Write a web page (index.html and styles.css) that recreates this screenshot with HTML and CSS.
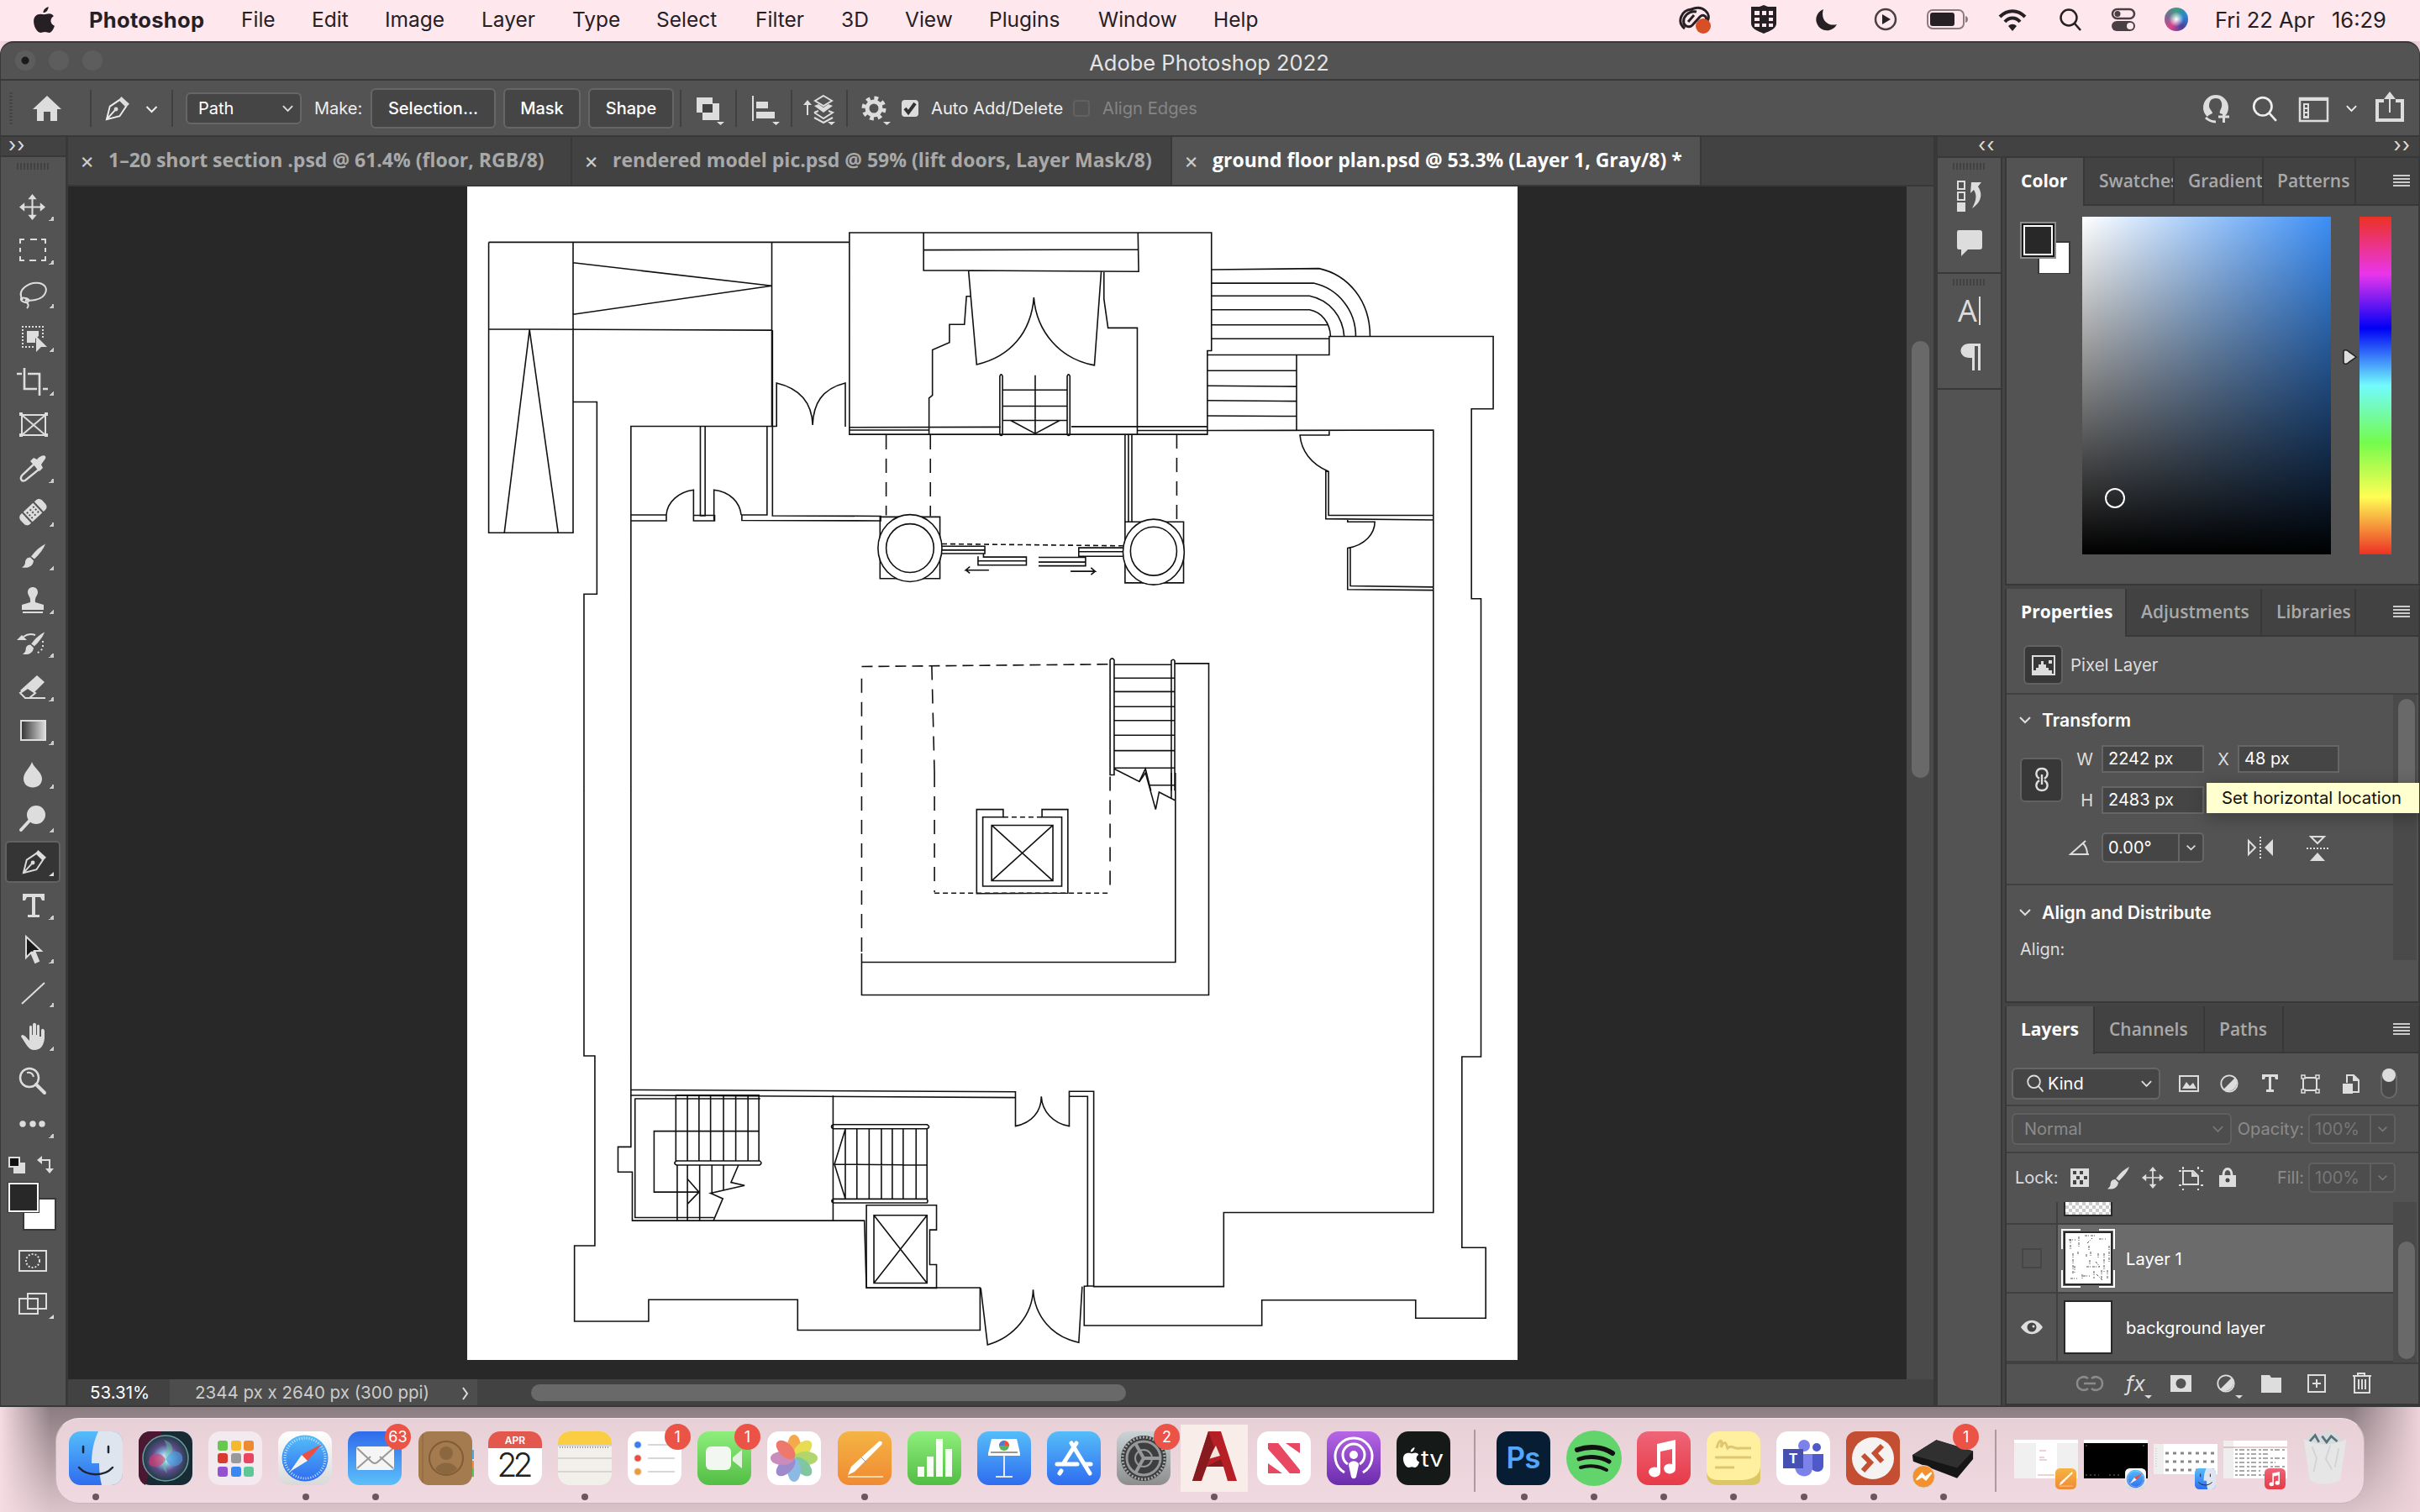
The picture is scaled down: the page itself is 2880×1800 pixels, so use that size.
FILE: index.html
```html
<!DOCTYPE html>
<html lang="en">
<head>
    <meta charset="UTF-8">
    <title>Adobe Photoshop 2022</title>
    <link rel="stylesheet" href="styles.css">
</head>
<body>
    <!-- shared icons -->
    <svg class="defs">
        <defs>
            <linearGradient id="blue" x1="0" y1="0" x2="0" y2="1"><stop offset="0" stop-color="#55bdf9"/><stop offset="1" stop-color="#2f6cf0"/></linearGradient>
            <linearGradient id="blueDown" x1="0" y1="0" x2="0" y2="1"><stop offset="0" stop-color="#2f6bea"/><stop offset="1" stop-color="#5cc0fa"/></linearGradient>
            <linearGradient id="orange" x1="0" y1="0" x2="0" y2="1"><stop offset="0" stop-color="#f4b443"/><stop offset="1" stop-color="#f08a34"/></linearGradient>
            <linearGradient id="green" x1="0" y1="0" x2="0" y2="1"><stop offset="0" stop-color="#8eee7c"/><stop offset="1" stop-color="#53bd45"/></linearGradient>
            <linearGradient id="pinkRed" x1="0" y1="0" x2="0" y2="1"><stop offset="0" stop-color="#ee6578"/><stop offset="1" stop-color="#e73a47"/></linearGradient>
            <linearGradient id="purple" x1="0" y1="0" x2="0" y2="1"><stop offset="0" stop-color="#b666e6"/><stop offset="1" stop-color="#6a2cac"/></linearGradient>
            <linearGradient id="grey" x1="0" y1="0" x2="0" y2="1"><stop offset="0" stop-color="#c9d3d6"/><stop offset="1" stop-color="#8d8d8d"/></linearGradient>
            <linearGradient id="white" x1="0" y1="0" x2="0" y2="1"><stop offset="0" stop-color="#fff"/><stop offset="1" stop-color="#d9d9d9"/></linearGradient>
            <linearGradient id="blackWhite"><stop offset="0" stop-color="#333"/><stop offset="1" stop-color="#ddd"/></linearGradient>
            <radialGradient id="siri"><stop offset="0" stop-color="#fff"/><stop offset=".25" stop-color="#8fc3ea"/><stop offset=".6" stop-color="#5b4c86"/><stop offset="1" stop-color="#1f3a44"/></radialGradient>
        </defs>
        <symbol id="chevron" viewBox="0 0 16 10"><path d="M2 2l6 6 6-6" fill="none" stroke="currentColor" stroke-width="2"/></symbol>
        <symbol id="pen" viewBox="0 0 30 30"><path d="M2 28L6 12 18 4l8 8-8 12zM2 28l11-12" fill="none" stroke="currentColor" stroke-width="2"/><circle cx="13.500" cy="15.500" r="2.500"/><path d="M17 4l3-4 10 9-4 4z"/></symbol>
        <symbol id="brush" viewBox="0 0 30 30"><path d="M29 0c-6 3-12 8-17 15l4 3C22 12 27 6 29 0zM11 16c-4 0-6 3-6 6 0 3-2 5-4 6 6 1 13 0 14-8z"/></symbol>
        <symbol id="move" viewBox="0 0 30 30"><path d="M15 0l5 6h-4v8h8v-4l6 5-6 5v-4h-8v8h4l-5 6-5-6h4v-8H6v4l-6-5 6-5v4h8V6h-4z"/></symbol>
        <symbol id="search" viewBox="0 0 30 30"><g fill="none" stroke="currentColor" stroke-width="2.500"><circle cx="13" cy="12" r="10"/><path d="M20 19l8 9"/></g></symbol>
        <symbol id="adjust" viewBox="0 0 22 22"><circle cx="11" cy="11" r="9.700" fill="none" stroke="currentColor" stroke-width="1.800"/><path d="M18 4A10 10 0 0 1 4 18z"/></symbol>
        <symbol id="apple" viewBox="0 0 24 30"><path d="M17 0c0 4-3 7-6 7 0-4 3-6 6-7zM12 9c2 0 3-1 6-1 2 0 4 1 5 3-5 3-4 9 1 11-1 4-4 8-6 8s-3-1-5-1-4 1-5 1C4 30 0 23 0 17c0-7 5-10 12-8z"/></symbol>
        <symbol id="finder" viewBox="0 0 64 64">
            <rect width="64" height="64" rx="14" fill="url(#blue)"/><path d="M35 0h15a14 14 0 0 1 14 14v36a14 14 0 0 1-14 14H39c-2-8-3-16-3-26h-9C27 24 30 10 35 0z" fill="#dfe5ee"/>
            <path d="M17 18v7M47 18v7M12 43c10 11 30 11 40 0" fill="none" stroke="#1d2530" stroke-width="2.500" stroke-linecap="round"/>
        </symbol>
        <symbol id="safari" viewBox="0 0 64 64">
            <rect width="64" height="64" rx="14" fill="url(#white)"/><circle cx="32" cy="32" r="27.500" fill="url(#blue)"/><circle cx="32" cy="32" r="24" fill="none" stroke="#cfe5fb" stroke-width="3" stroke-dasharray="1 2"/>
            <path d="M52 15L28 28l7 7z" fill="#ee4d42"/><path d="M14 48l14-20 7 7z" fill="#f2f2f2"/>
        </symbol>
        <symbol id="pages" viewBox="0 0 64 64"><rect width="64" height="64" rx="14" fill="url(#orange)"/><path d="M12 54h42" stroke="#fbd9a8" stroke-width="2"/><path d="M12 52l4-10 33-30c3-1 5 1 3 4L20 48z" fill="#fff"/><path d="M28 31l6 6" stroke="#999"/></symbol>
        <symbol id="music" viewBox="0 0 64 64"><rect width="64" height="64" rx="14" fill="url(#pinkRed)"/><path d="M24 15l22-5v34a7 6 0 1 1-4-5V21l-14 3v24a7 6 0 1 1-4-5z" fill="#fff"/></symbol>
    </svg>

    <header class="menubar">
        <svg class="apple" viewBox="0 0 24 30"><use href="#apple"/></svg>
        <nav class="menu">
            <b>Photoshop</b><span>File</span><span>Edit</span><span>Image</span><span>Layer</span><span>Type</span><span>Select</span><span>Filter</span><span>3D</span><span>View</span><span>Plugins</span><span>Window</span><span>Help</span>
        </nav>
        <div class="status-icons">
            <svg viewBox="0 0 40 34"><g fill="none" stroke="#262024" stroke-width="3"><path d="M8 28C-2 20 4 6 16 5c14-6 24 6 19 14M22 8c-9-2-17 6-15 14 2 4 7 5 10 2l9-10c4-4 9 0 7 4M12 20l7-8"/></g><circle cx="30" cy="25" r="9" fill="#d84f27"/></svg>
            <svg viewBox="0 0 40 34"><path d="M5 2h10l5-2 5 2h10v20c0 6-8 9-15 12C13 31 5 28 5 22z" fill="#262024"/><path d="M9 7h6v5H9zM18 7h5v5h-5zM26 7h5v5h-5zM9 15h6v4H9zM26 15h5v4h-5zM9 22h6v4H9zM18 22h5v4h-5zM26 22h5v4h-5z" fill="#ffe7ee"/></svg>
            <svg viewBox="0 0 40 34"><path d="M16 5a13 13 0 1 0 16 18C21 26 12 17 16 5z" fill="#262024"/></svg>
            <svg viewBox="0 0 40 34"><circle cx="20" cy="17" r="12" fill="none" stroke="#4a3f44" stroke-width="2.500"/><path d="M16 11l10 6-10 6z" fill="#262024"/></svg>
            <svg class="battery" viewBox="0 0 52 34"><rect x="2" y="6" width="43" height="22" rx="6" fill="none" stroke="#8d7b82" stroke-width="2"/><rect x="5" y="9" width="29" height="16" rx="3" fill="#262024"/><path d="M47 13v8c4-1 4-7 0-8z" fill="#8d7b82"/></svg>
            <svg viewBox="0 0 40 34"><g fill="none" stroke="#262024" stroke-width="4"><path d="M5 14c9-9 21-9 30 0M11 20c5-6 13-6 18 0"/></g><path d="M15 25c3-3 7-3 10 0l-5 6z" fill="#262024"/></svg>
            <svg viewBox="0 0 40 34"><g fill="none" stroke="#262024" stroke-width="2.500"><circle cx="19" cy="15" r="9.500"/><path d="M26 22l7 8"/></g></svg>
            <svg viewBox="0 0 40 34"><rect x="7" y="5" width="26" height="11" rx="5.500" fill="none" stroke="#4a3f44" stroke-width="2.500"/><circle cx="13" cy="10.500" r="3.500" fill="#4a3f44"/><rect x="6" y="19" width="28" height="12" rx="6" fill="#4a3f44"/><circle cx="28" cy="25" r="4" fill="#ffe7ee"/></svg>
            <i class="siri-ball"></i>
        </div>
        <span class="date">Fri 22 Apr</span><span class="time">16:29</span>
    </header>

    <main class="window">
        <div class="titlebar"><div class="lights"><i></i><i></i><i></i></div><span>Adobe Photoshop 2022</span></div>

        <div class="options">
            <svg class="options-left" viewBox="0 0 220 66">
                <path d="M12 14v40" stroke="#454545" stroke-width="4" stroke-dasharray="2 2"/>
                <path d="M55 18L38 34h5v14h8V37h8v11h8V34h5z"/>
                <path d="M107 11v44M204 11v44" stroke="#404040" stroke-width="2"/>
                <use href="#pen" x="124" y="19" width="29" height="29"/><use href="#chevron" x="171" y="29" width="17" height="10"/>
            </svg>
            <div class="select path">Path <svg viewBox="0 0 16 10"><use href="#chevron"/></svg></div>
            <span class="make">Make:</span>
            <button class="selection">Selection...</button><button class="mask">Mask</button><button class="shape">Shape</button>
            <svg class="options-icons" viewBox="0 0 260 66">
                <g stroke="#404040" stroke-width="2"><path d="M8 11v44M74 11v44M140 11v44M206 11v44"/></g>
                <path d="M27 20h19v7h8v20H34v-9h-7z"/><path d="M34 28h12v10H34z" fill="#424242"/><path d="M51 49h9l-4.500 4zM117 49h9l-4.500 4zM183 49h9l-4.500 4zM249 49h9l-4.500 4z"/>
                <path d="M93 18h2v30h-2zM98 25h14v8H98zM98 37h22v8H98z"/>
                <path d="M178 18l10 6-10 6-10-6z" fill="none" stroke="#ddd" stroke-width="2"/><path d="M167 30l5-2 6 4 6-4 5 2-11 8zM160 29v12h-2V29h-4l5-6 5 6z"/><path d="M167 38l11 7 11-7-5-2M167 38l5-2M167 44l11 6 11-6" fill="none" stroke="#ddd" stroke-width="2"/>
                <circle cx="238" cy="33" r="8" fill="none" stroke="#ddd" stroke-width="5"/><circle cx="238" cy="33" r="12" fill="none" stroke="#ddd" stroke-width="5" stroke-dasharray="4.700 4.725"/>
            </svg>
            <i class="check on"><svg viewBox="0 0 20 20"><path d="M4 10l4 5 8-11" fill="none" stroke="#333" stroke-width="4"/></svg></i><span class="auto">Auto Add/Delete</span>
            <i class="check"></i><span class="dim">Align Edges</span>
            <svg class="options-right" viewBox="0 0 260 66">
                <circle cx="26" cy="32" r="15"/><path d="M26 21c6 0 8 5 7 10-1 4-3 5-2 8 5 1 8 3 10 5l-5 8H20l-6-7c2-3 5-5 8-6 0-3-3-4-4-8 0-6 2-10 8-10z" fill="#535353"/><path d="M14 44c4 4 8 5 12 5" fill="none" stroke="#ddd" stroke-width="3"/><path d="M29 43h13M35.500 36v14" stroke="#ddd" stroke-width="3"/>
                <use href="#search" x="68" y="18" width="32" height="32"/>
                <path d="M126 21h33v27h-33z" fill="none" stroke="#ddd" stroke-width="2.500"/><path d="M126 20h33v4h-33zM130 27h7v18h-7z"/><path d="M133.500 29v14" stroke="#535353" stroke-width="3" stroke-dasharray="3 2"/>
                <use href="#chevron" x="180" y="28" width="15" height="10"/>
                <path d="M226 24h-8v23h30V24h-8" fill="none" stroke="#ddd" stroke-width="4"/><path d="M232 38V22h-6l7-9 7 9h-6v16z"/>
            </svg>
        </div>

        <div class="workspace">
            <aside class="tools">
                <div class="strip left">››</div>
                <div class="grip"></div>
                <svg class="tool" viewBox="0 0 76 52"><use href="#move" x="23" y="11" width="31" height="31"/></svg>
                <svg class="tool" viewBox="0 0 76 52"><path d="M24 18v-5h5M36 13h8M49 13h5v5M54 23v5M54 33v5h-5M43 38h-8M29 38h-5v-5M24 28v-5" fill="none" stroke="#ddd" stroke-width="2"/></svg>
                <svg class="tool" viewBox="0 0 76 52"><path d="M27 33C19 21 35 11 47 13c13 3 9 17-5 20-5 1-9 1-12 0M25 31c3-1 9 0 10 3-3 4-11 1-10-3zM30 35c4 2 5 5 2 8" fill="none" stroke="#ddd" stroke-width="2"/></svg>
                <svg class="tool" viewBox="0 0 76 52"><path d="M51 26V13H27v24h13" fill="none" stroke="#ddd" stroke-width="2" stroke-dasharray="2 2"/><path d="M32 18h14v6l-4 3v5H32zM43 24l13 13h-7l-6 6z"/></svg>
                <svg class="tool" viewBox="0 0 76 52"><path d="M20 17h6M33 17h14v26M29 10v25h15M51 35h6" fill="none" stroke="#ddd" stroke-width="2.600"/></svg>
                <svg class="tool nocorner" viewBox="0 0 76 52"><path d="M26 14h28v24H26zl28 24M54 14L26 38" fill="none" stroke="#ddd" stroke-width="2"/><path d="M23 11h4v4h-4zM53 11h4v4h-4zM23 36h4v4h-4zM53 36h4v4h-4z"/></svg>
                <svg class="tool" viewBox="0 0 76 52"><path d="M41 20L27 33c-4 4-2 9 3 7l16-13z" fill="none" stroke="#ddd" stroke-width="2.400"/><path d="M36 17l4-4 4 2c5-6 12-6 10-1l-5 7 2 4-4 4z"/></svg>
                <svg class="tool" viewBox="0 0 76 52"><g transform="rotate(-43 39 26)"><rect x="22" y="18" width="35" height="16" rx="5"/><path d="M30 17v18M48 17v18" stroke="#535353" stroke-width="2"/><path d="M33 22h13M33 26h13M33 30h13" stroke="#535353" stroke-width="2" stroke-dasharray="2 3"/></g></svg>
                <svg class="tool" viewBox="0 0 76 52"><use href="#brush" x="25" y="11" width="30" height="31"/></svg>
                <svg class="tool" viewBox="0 0 76 52"><path d="M33 17c0-8 12-8 12 0 0 4-4 6-3 12l10 3v6H26v-6l10-3c1-6-3-8-3-12zM27 40h24v2H27z"/></svg>
                <svg class="tool" viewBox="0 0 76 52"><use href="#brush" x="26" y="11" width="28" height="31"/><path d="M20 22l6-6 6 6z"/><path d="M28 18c4-3 8-4 14-2" fill="none" stroke="#ddd" stroke-width="2"/><path d="M51 23v9l-7 6" fill="none" stroke="#ddd" stroke-width="2" stroke-dasharray="2 3"/></svg>
                <svg class="tool" viewBox="0 0 76 52"><path d="M44 12l9 8-18 18-11-8z"/><path d="M30 39h24M33 27l-9 6 6 6h5l7-6z" fill="#535353" stroke="#ddd" stroke-width="2"/></svg>
                <svg class="tool" viewBox="0 0 76 52"><rect x="25" y="14" width="29" height="23" fill="url(#blackWhite)" stroke="#ddd" stroke-width="2"/></svg>
                <svg class="tool" viewBox="0 0 76 52"><path d="M38 11c2 7 12 12 12 20 0 14-22 14-22 0 0-8 8-13 10-20z"/></svg>
                <svg class="tool" viewBox="0 0 76 52"><circle cx="43" cy="22" r="11"/><path d="M36 28L25 40" stroke="#ddd" stroke-width="4" stroke-linecap="round"/></svg>
                <svg class="tool active" viewBox="0 0 76 52"><rect x="7" y="2" width="64" height="48" rx="4" fill="#353535" stroke="#626262" stroke-width="2"/><use href="#pen" x="26" y="12" width="29" height="29"/><path d="M58 43l6-5v5z"/></svg>
                <svg class="tool" viewBox="0 0 76 52"><path d="M27 12h26v8h-3l-2-4h-6v21h5v3H33v-3h5V16h-6l-2 4h-3z"/></svg>
                <svg class="tool" viewBox="0 0 76 52"><path d="M31 11l18 17h-8l5 12-4 2-5-12-6 6z" fill="#181818" stroke="#ddd" stroke-width="2"/><path d="M37 29l5 13 4-2-5-12z"/></svg>
                <svg class="tool" viewBox="0 0 76 52"><path d="M26 39l27-25" stroke="#ddd" stroke-width="2"/></svg>
                <svg class="tool" viewBox="0 0 76 52"><path d="M26 24c4 0 6 4 9 7V15c0-3 3-3 3 0v9h1V12c0-3 4-3 4 0v12h1V14c0-3 3-3 3 0v12h2v-7c0-3 3-3 4 0v9c-1 9-5 14-12 14-8 0-10-8-16-16z"/></svg>
                <svg class="tool nocorner" viewBox="0 0 76 52"><circle cx="35" cy="23" r="11" fill="none" stroke="#ddd" stroke-width="2.500"/><path d="M32 17c4-1 7 1 8 5" fill="none" stroke="#ddd" stroke-width="2"/><path d="M43 31l10 10" stroke="#ddd" stroke-width="4" stroke-linecap="round"/></svg>
                <svg class="tool" viewBox="0 0 76 52"><circle cx="27" cy="26" r="3.700"/><circle cx="39" cy="26" r="3.700"/><circle cx="50" cy="26" r="3.700"/></svg>
                <svg class="swatches" viewBox="0 0 78 230">
                    <path d="M16 20h14v13H16z"/><path d="M11 14h12v11H11z" fill="#111" stroke="#ddd" stroke-width="2"/><path d="M48 17h11v13" fill="none" stroke="#ddd" stroke-width="2"/><path d="M50 12v10l-6-5zM54 27h10l-5 6z"/>
                    <path d="M28 63h38v37H28z" fill="#fff" stroke="#383838" stroke-width="2"/><path d="M9 43h38v37H9z" fill="#383838"/><path d="M11 45h34v33H11z" fill="#282828" stroke="#fff" stroke-width="2"/>
                    <path d="M23 125h32v24H23z" fill="#4b4b4b" stroke="#ddd" stroke-width="2"/><circle cx="39" cy="137" r="8" fill="none" stroke="#ddd" stroke-width="2" stroke-dasharray="2 2"/>
                    <path d="M23 182h22v18H23zM33 176h22v18H33z" fill="#535353" stroke="#ddd" stroke-width="2"/><path d="M58 206l6-5v5z"/>
                </svg>
            </aside>

            <section class="document">
                <div class="tabs">
                    <div class="tab one"><i>×</i>1–20 short section .psd @ 61.4% (floor, RGB/8)</div>
                    <div class="tab two"><i>×</i>rendered model pic.psd @ 59% (lift doors, Layer Mask/8)</div>
                    <div class="tab three active"><i>×</i>ground floor plan.psd @ 53.3% (Layer 1, Gray/8) *</div>
                </div>
                <div class="canvas">
                    <svg class="paper" viewBox="0 0 1250 1397">
                        <!-- north half -->
                        <g transform="translate(-6 -2) scale(.80995 .45918)">
                            <path d="M39 149H569V124H1101V430H1095V647H569V149M39 149V902H163V149M455 149V627M163 202l292 60-292 74M39 374l416 3M62 902l37-526 42 526M163 563h35v498h-19v510M248 1571V626h214M350 626v232h7V626M448 626v230h-37v14l204 1v-12l-159-1V377M248 856h52v15h-52M300 856c1-33 18-60 40-65v80h31v-14h-31M410 856c-2-33-16-60-40-65v80"/>
                            <path d="M678 124v98h66l250 3-1-101M678 169l315-1M744 222l12 244c50-20 80-84 84-174 4 90 39 160 89 176l10-243M943 226v70l6 75h43v276M747 289h-6l-3 73h-22v47l-25 19v118l-5 7v94M569 629l222-1M569 636h118M895 627h200M992 637h103M462 627V514c36 15 52 55 53 109 1-54 13-94 48-109v113"/>
                            <path d="M790 648V496q2-8 4 0v152q-2 4-4 0M889 648V496q2-8 4 0v152q-2 4-4 0M842 494v151M794 532h95M794 574h95M794 611h95M806 611l36 34 36-34"/>
                            <path d="M1101 220l158-3c42 16 75 82 75 176M1101 255h150c36 14 62 70 62 138M1101 288h144c31 11 49 56 51 105M1101 324h144c18 6 30 33 31 69M1101 363h171M1101 399h173M1095 441h179v-48h241v188h-32v492h14v498M1226 441v196M1095 482h131M1095 521l131 2M1095 559l131 2M1095 599l131 1M1095 637l332-1v935M1274 637v12h-43c2 40 16 75 42 94v114h154M1273 743h-4v123l158 3M1301 867v7h40c0 30-14 60-40 68v107l126 2M1305 942v98l122 3M974 647v227h86v158h-86V874M979 647v225M984 647v225M614 861h88v160h-88z"/>
                            <ellipse cx="658" cy="942" rx="47" ry="87" class="fill"/><ellipse cx="658" cy="942" rx="35" ry="63"/><ellipse cx="1016" cy="952" rx="45" ry="85" class="fill"/><ellipse cx="1016" cy="950" rx="34" ry="63"/>
                            <path d="M705 937h63v19h-63M705 947h63M766 956v9h63v21h-71v-23M758 975h71M971 941h-65v22h65M906 951h65M847 966h69v22h-69M847 978h69M774 999h-34l6-9M740 999l6 8M894 1002h36l-6-9M930 1002l-6 9"/>
                            <path d="M623 649v208M688 649v210M1050 647v225" class="dash"/><path d="M705 931l266 5" class="short"/>
                            <path d="M587 1280v245M690 1247l4 278" class="dash"/><path d="M587 1249l365-6" class="dash small"/>
                            <path d="M952 1530V1232q3-8 6 0v298zM1042 1571V1234q3-6 5 0v337M1047 1241h50v330M958 1244h84M958 1279h89M958 1314h89M958 1353h89M958 1389h89M958 1427h89M958 1467h89M958 1512h89M958 1514l37 33 9-33 8 57"/>
                        </g>
                        <!-- south half -->
                        <g transform="translate(-6 698) scale(.80995 .45918)">
                            <path d="M179 46v688h16v492h-30v196h109v-56h219v79h268v-110H594l-3-174H250v-126h-21v-65h19V46M248 822l565 5v89c24-8 38-38 38-77 1 38 17 70 41 77v-90h36v506h191v-192h308V46M1497 46v690h-28v495h35v183h-103v-47h-226v66H914v-102l14-1M248 836l565 6M892 839h27v492M254 844v309h116M254 845h184"/>
                            <path d="M587 468v108h510V46M587 491h461V0M995 23l9-23 15 95 5-45 24 22M1042 0v66M1010 32h38"/>
                            <path d="M587 0v468M694 0v310M952 10v302" class="dash"/><path d="M694 312h258M795 115h57" class="short"/>
                            <path d="M756 313V95h39v20h-30v179h116V115h-29V95h38v217zM778 136h90v144h-90zl90 144M868 136l-90 144"/>
                            <path d="M314 836h122v170M314 836v170M331 836v170M348 836v170M365 836v170M384 836v170M402 836v170M420 836v170M436 929H282v158h66l-17-34M348 1087l-17 31M315 1006h122q5 6 0 11H315q-6-5 0-11M316 1017v145M331 1017v145M349 1017v145M367 1017v72M384 1017v66M406 1017l-11 45 20 8-50 20 18 14-14 58"/>
                            <path d="M545 837v325M545 912h138q6 6 0 11H545q-5-6 0-11M545 1105h138q2 5 0 10H545q-4-5 0-10M547 1015l136 2M563 924l-16 91 16 89zM580 924v181M598 924v181M616 924v181M632 924v181M648 924v181M667 924v181M683 924v181"/>
                            <path d="M594 1335v-214h103v64h-10v90h10v61zM605 1147h78v176h-78zl78 176M683 1147l-78 176M762 1336l10 147c40-20 66-80 67-143 2 70 28 122 67 137l5-145"/>
                        </g>
                    </svg>
                    <div class="vscroll"><i></i></div>
                </div>
                <div class="status"><span class="zoom">53.31%</span><span class="size">2344 px x 2640 px (300 ppi)<svg viewBox="0 0 8 18"><path d="M1 2l5 7-5 7" fill="none" stroke="#ddd" stroke-width="2"/></svg></span><div class="hscroll"><i></i></div></div>
            </section>

            <div class="right">
                <div class="strip"><span>‹‹</span><span>››</span></div>
                <div class="columns">
                    <aside class="icons">
                        <div class="group"><div class="grip"></div>
                            <svg viewBox="0 0 76 120"><g fill="none" stroke="#ddd" stroke-width="2"><path d="M24 12h8v9h-8zM24 25h8v9h-8z"/></g><path d="M23 37h10v11H23zM40 13h12l-4 5c6 9 4 19-7 26 5-9 6-16 2-22l-4 4zM25 70h25q3 0 3 3v17q0 3-3 3H36l-8 8v-8h-3q-2 0-2-3V73q0-3 2-3z"/></svg></div>
                        <div class="group"><div class="grip"></div>
                            <span class="glyph">A<i></i></span>
                            <svg class="para" viewBox="0 0 76 40"><path d="M38 4h13v32h-3V7h-4v29h-3V21h-3c-14 0-14-17 0-17z"/></svg></div>
                    </aside>
                    <div class="panels">
                        <section class="panel color">
                            <div class="ptabs"><b class="on">Color</b><b>Swatches</b><b>Gradients</b><b>Patterns</b><svg viewBox="0 0 20 16"><path d="M0 2h20M0 6h20M0 10h20M0 14h20" stroke="#ccc" stroke-width="1.800"/></svg></div>
                            <div class="picker">
                                <svg class="chips" viewBox="0 0 62 64"><path d="M22 26h37v38H22z" fill="#fff" stroke="#383838" stroke-width="2"/><path d="M0 2h43v44H0z" fill="#8d8d8d"/><path d="M2 4h39v40H2z" fill="#1b1b1b"/><path d="M5 7h33v34H5z" fill="#282828" stroke="#fff" stroke-width="2"/></svg>
                                <div class="field"><i></i></div>
                                <svg class="marker" viewBox="0 0 18 20"><path d="M2 4q0-3 4-2l11 8-11 8q-4 1-4-2z" fill="#ddd" stroke="#222" stroke-width="1.500"/></svg>
                                <div class="hue"></div>
                            </div>
                        </section>

                        <section class="panel properties">
                            <div class="ptabs"><b class="on">Properties</b><b>Adjustments</b><b>Libraries</b><svg viewBox="0 0 20 16"><path d="M0 2h20M0 6h20M0 10h20M0 14h20" stroke="#ccc" stroke-width="1.800"/></svg></div>
                            <div class="kind"><span class="box"><svg viewBox="0 0 28 24"><path d="M1 1h26v22H1z" fill="none" stroke="#ddd" stroke-width="2"/><path d="M2 23v-5h3v-3h3v-4h3V7h3v4h3v4h3v3h4v5zM20 6h4v4h-4z"/></svg></span>Pixel Layer</div>
                            <div class="scrollbox">
                                <div class="props">
                                    <h3><svg viewBox="0 0 16 10"><use href="#chevron"/></svg>Transform</h3>
                                    <div class="transform">
                                        <span class="link"><svg viewBox="0 0 16 30"><path d="M5 14C-1 10 1 2 8 2s9 8 3 12M5 16c-6 4-4 12 3 12s9-8 3-12M8 9v12" fill="none" stroke="#ddd" stroke-width="2.400"/></svg></span>
                                        <label>W</label><span class="input">2242 px</span><label class="x">X</label><span class="input">48 px</span>
                                        <label>H</label><span class="input">2483 px</span>
                                        <svg class="angle" viewBox="0 0 26 20"><path d="M24 18H2L20 2M17 5c4 4 5 8 5 13" fill="none" stroke="#ddd" stroke-width="2"/></svg>
                                        <span class="input combo">0.00° <svg viewBox="0 0 16 10"><use href="#chevron"/></svg></span>
                                        <svg class="flips" viewBox="0 0 110 34"><path d="M12 9v16l8-8zM86 4h16l-8 8z" fill="none" stroke="#ddd" stroke-width="2"/><path d="M41 7v20l-10-10zM85 33h18l-9-10z"/><path d="M26 4v28M81 18h27" stroke="#ddd" stroke-width="2" stroke-dasharray="2 2"/></svg>
                                    </div>
                                    <h3 class="second"><svg viewBox="0 0 16 10"><use href="#chevron"/></svg>Align and Distribute</h3>
                                    <p>Align:</p>
                                </div>
                                <div class="bar"><i></i></div>
                                <div class="tooltip">Set horizontal location</div>
                            </div>
                        </section>

                        <section class="panel layers">
                            <div class="ptabs"><b class="on">Layers</b><b>Channels</b><b>Paths</b><svg viewBox="0 0 20 16"><path d="M0 2h20M0 6h20M0 10h20M0 14h20" stroke="#ccc" stroke-width="1.800"/></svg></div>
                            <div class="row filter">
                                <div class="select"><svg class="mag" viewBox="0 0 30 30"><use href="#search"/></svg>Kind <svg viewBox="0 0 16 10"><use href="#chevron"/></svg></div>
                                <svg class="filters" viewBox="0 0 290 64">
                                    <path d="M23 23h22v18H23z" fill="none" stroke="#ddd" stroke-width="2"/><path d="M26 38l5-8 4 5 4-4 4 7z"/>
                                    <use href="#adjust" x="71" y="21" width="22" height="22"/>
                                    <path d="M121 21h19v6h-3l-1-3h-4v15h3v3h-9v-3h3V24h-4l-1 3h-3z"/>
                                    <path d="M170 25h16v15h-16z" fill="none" stroke="#ddd" stroke-width="2"/><g fill="#535353" stroke="#ddd" stroke-width="1.500"><path d="M168 22h4v4h-4zM185 22h4v4h-4zM168 39h4v4h-4zM185 39h4v4h-4z"/></g>
                                    <path d="M222 31V22h8l6 6v14h-9" fill="none" stroke="#ddd" stroke-width="2"/><path d="M217 32h12v12h-12zM229 21v8h8z"/>
                                    <rect x="263" y="15" width="18" height="34" rx="9" fill="#484848" stroke="#696969" stroke-width="2"/><circle cx="272" cy="22" r="8"/>
                                </svg>
                            </div>
                            <div class="row blend">
                                <div class="select">Normal <svg viewBox="0 0 16 10"><use href="#chevron"/></svg></div>
                                <span class="name">Opacity:</span><span class="input combo">100% <svg viewBox="0 0 16 10"><use href="#chevron"/></svg></span>
                            </div>
                            <div class="row lock">
                                <span>Lock:</span>
                                <svg class="locks" viewBox="0 0 220 60">
                                    <path d="M13 19h22v22H13z"/><path d="M16 22h4v4h-4zM24 22h4v4h-4zM20 28h4v4h-4zM29 28h4v4h-4zM16 33h4v5h-4zM24 33h4v5h-4z" fill="#444"/>
                                    <use href="#brush" x="56" y="17" width="28" height="28"/><use href="#move" x="98" y="17" width="26" height="26"/>
                                    <path d="M147 22h12l6 6v10h-18z" fill="none" stroke="#ddd" stroke-width="2"/><path d="M157 22v7h8z"/><path d="M142 22h29M142 39h29M147 17v28M165 17v28" stroke="#ddd" stroke-width="2" stroke-dasharray="3 23"/>
                                    <path d="M190 27h20v14h-20z"/><path d="M195 27c0-10 10-10 10 0" fill="none" stroke="#ddd" stroke-width="3"/><circle cx="200" cy="33" r="2.500" fill="#444"/>
                                </svg>
                                <span class="name">Fill:</span><span class="input combo">100% <svg viewBox="0 0 16 10"><use href="#chevron"/></svg></span>
                            </div>
                            <div class="scrollbox">
                                <div class="list">
                                    <div class="layer cut"><span class="eye"></span><i class="thumb checker"></i></div>
                                    <div class="layer selected"><span class="eye"><i></i></span>
                                        <svg class="thumb framed" viewBox="0 0 66 72"><path d="M2 25V2h22M46 2h18v23M64 50v20H46M24 70H2V50" fill="none" stroke="#fff" stroke-width="2"/><path d="M5 5h56v62H5z" fill="#fff" stroke="#282828" stroke-width="2"/><path d="M10 14h8M12 13v12M22 10v14M29 9h12M32 18l6-6M46 13h8M34 21v5M15 30v25M21 28v4M31 31v4M36 28v5M45 30v6M52 30v22M35 38v6M42 40l5 6M31 46h16M17 45v8M12 60h8M26 55v5M27 57h8M40 51v9M43 55l7 7M49 50v10M58 21v20M56 50v11" fill="none" stroke="#555" stroke-dasharray="3 1 1 2"/></svg>
                                        Layer 1</div>
                                    <div class="layer"><span class="eye"><svg viewBox="0 0 26 18"><path d="M0 9C7-2 19-2 26 9 19 20 7 20 0 9z"/><circle cx="13" cy="9" r="5.500" fill="#444"/><circle cx="15" cy="8" r="1.500"/></svg></span><i class="thumb plain"></i>background layer</div>
                                </div>
                                <div class="bar"><i></i></div>
                            </div>
                            <div class="footer">
                                <svg viewBox="0 0 490 48">
                                    <path d="M97 17c-5-4-13-1-13 6s8 10 13 6M101 17c5-4 13-1 13 6s-8 10-13 6M92 23h14" fill="none" stroke="#8b8b8b" stroke-width="2.500"/>
                                    <text x="142" y="32" font-style="italic" font-size="25" fill="#ddd">fx</text><path d="M164 37h9l-4 4zM272 37h9l-4 4z"/>
                                    <path d="M195 13h25v20h-25z"/><circle cx="207.500" cy="23" r="6" fill="#535353"/>
                                    <use href="#adjust" x="250" y="12" width="22" height="22"/><path d="M303 13h10l2 3h12v18h-24z"/>
                                    <path d="M359 13h20v20h-20zM369 18v10M364 23h10M414 15v19h18V15M412 14h22M418 14v-3h8v3M419 18v12M423 18v12M427 18v12" fill="none" stroke="#ddd" stroke-width="2"/>
                                </svg>
                            </div>
                        </section>
                    </div>
                </div>
            </div>
        </div>
    </main>

    <footer class="dock">
        <div class="app running"><svg viewBox="0 0 64 64"><use href="#finder"/></svg></div>
        <div class="app"><svg viewBox="0 0 64 64"><rect width="64" height="64" rx="14" fill="#172b35"/><path d="M0 50V14A14 14 0 0 1 14 0h14L8 64Q0 60 0 50z" fill="#4b1733"/><circle cx="32" cy="32" r="27" fill="url(#siri)" stroke="#6d9c9b" stroke-width="1.500"/><path d="M12 38c0-15 16-14 20-4-5 8-16 12-20 4z" fill="#d23a6d" opacity=".7"/><path d="M32 33c8-14 22-10 20 2-5 9-14 9-20-2z" fill="#499bdc" opacity=".7"/><path d="M30 10c10 3 15 12 4 20-4 3-2 10 0 20-7-6-6-12-3-20s4-12-1-20z" fill="#68c19d" opacity=".5"/></svg></div>
        <div class="app"><svg viewBox="0 0 64 64"><rect width="64" height="64" rx="14" fill="#f2eaee"/><g><rect x="11" y="11" width="12" height="12" rx="3" fill="#69c750"/><rect x="27" y="11" width="12" height="12" rx="3" fill="#f5b930"/><rect x="42" y="11" width="12" height="12" rx="3" fill="#ee8b2f"/><rect x="11" y="26" width="12" height="12" rx="3" fill="#d93a30"/><rect x="27" y="26" width="12" height="12" rx="3" fill="#999"/><rect x="42" y="26" width="12" height="12" rx="3" fill="#ea4560"/><rect x="11" y="42" width="12" height="12" rx="3" fill="#9352cf"/><rect x="27" y="42" width="12" height="12" rx="3" fill="#3c88f2"/><rect x="42" y="42" width="12" height="12" rx="3" fill="#5fc795"/></g></svg></div>
        <div class="app running"><svg viewBox="0 0 64 64"><use href="#safari"/></svg></div>
        <div class="app running"><svg viewBox="0 0 64 64"><rect width="64" height="64" rx="14" fill="url(#blueDown)"/><rect x="10" y="18" width="45" height="28" rx="3" fill="#f5f5f5"/><path d="M11 44l16-14M54 44L38 30M11 20l17 16q4 4 8 0l18-16" fill="none" stroke="#999" stroke-width="2"/></svg><em>63</em></div>
        <div class="app"><svg viewBox="0 0 64 64"><path d="M60 22h6v11h-6z" fill="#4aa8da"/><path d="M60 35h6v10h-6z" fill="#ef8f39"/><path d="M60 44h6v10h-6z" fill="#61bf58"/><rect width="64" height="64" rx="13" fill="#a47b4f"/><path d="M5 3v58" stroke="#8b653d"/><circle cx="33" cy="32" r="20" fill="none" stroke="#7f5c36" stroke-width="2"/><circle cx="33" cy="26" r="8" fill="#8b6740"/><path d="M20 45c4-10 22-10 26 0-8 8-18 8-26 0z" fill="#8b6740"/></svg></div>
        <div class="app"><svg viewBox="0 0 64 64"><rect width="64" height="64" rx="14" fill="#fff"/><path d="M0 20v-6A14 14 0 0 1 14 0h36a14 14 0 0 1 14 14v6z" fill="#e4574d"/><text x="32" y="15" font-size="12" font-weight="600" fill="#fff" text-anchor="middle">APR</text><text x="32" y="54" font-size="39" font-weight="300" fill="#222" text-anchor="middle" textLength="43">22</text></svg></div>
        <div class="app running"><svg viewBox="0 0 64 64"><rect width="64" height="64" rx="14" fill="#f3f0ec"/><path d="M0 16v-2A14 14 0 0 1 14 0h36a14 14 0 0 1 14 14v2z" fill="#fbcd43"/><path d="M0 17h64M0 32h64M0 48h64" stroke="#bbb" stroke-width="1"/><path d="M2 19h60" stroke="#999" stroke-width="2" stroke-dasharray="1 2"/></svg></div>
        <div class="app"><svg viewBox="0 0 64 64"><rect width="64" height="64" rx="14" fill="#fff"/><path d="M24 16h32M24 32h32M24 48h32" stroke="#ccc" stroke-width="1.500"/><g stroke="#eee" stroke-width="1.500"><circle cx="12" cy="16" r="4.500" fill="#3b7df0"/><circle cx="12" cy="32" r="4.500" fill="#e94d43"/><circle cx="12" cy="48" r="4.500" fill="#ee9a3b"/></g></svg><em>1</em></div>
        <div class="app"><svg viewBox="0 0 64 64"><rect width="64" height="64" rx="14" fill="url(#green)"/><rect x="10" y="18" width="30" height="28" rx="6" fill="#f2f7f1"/><path d="M42 31l11-9v22l-11-9z" fill="#e2f2df"/></svg><em>1</em></div>
        <div class="app"><svg viewBox="0 0 64 64"><rect width="64" height="64" rx="14" fill="#fff"/><g opacity=".85"><ellipse cx="32" cy="18" rx="8" ry="14" fill="#f49b31"/><ellipse cx="32" cy="18" rx="8" ry="14" fill="#e3d735" transform="rotate(45 32 32)"/><ellipse cx="32" cy="18" rx="8" ry="14" fill="#a3cf53" transform="rotate(90 32 32)"/><ellipse cx="32" cy="18" rx="8" ry="14" fill="#6bbd91" transform="rotate(135 32 32)"/><ellipse cx="32" cy="18" rx="8" ry="14" fill="#79aede" transform="rotate(180 32 32)"/><ellipse cx="32" cy="18" rx="8" ry="14" fill="#8c77c4" transform="rotate(225 32 32)"/><ellipse cx="32" cy="18" rx="8" ry="14" fill="#c078b0" transform="rotate(270 32 32)"/><ellipse cx="32" cy="18" rx="8" ry="14" fill="#ed6153" transform="rotate(315 32 32)"/></g></svg></div>
        <div class="app running"><svg viewBox="0 0 64 64"><use href="#pages"/></svg></div>
        <div class="app"><svg viewBox="0 0 64 64"><rect width="64" height="64" rx="14" fill="url(#green)"/><path d="M12 42h8v12h-8zM23 30h8v24h-8zM34 9h8v45h-8zM45 21h8v33h-8z" fill="#f7fff5"/></svg></div>
        <div class="app"><svg viewBox="0 0 64 64"><rect width="64" height="64" rx="14" fill="url(#blue)"/><path d="M17 9h30l4 17v3H13v-3z" fill="#fff"/><path d="M16 25h32" stroke="#999" stroke-width="2"/><path d="M31 29h2v24h9v2H22v-2h9z" fill="#e8e8e8"/><circle cx="32" cy="17" r="6" fill="#57b556"/><path d="M32 17v-6a6 6 0 0 1 6 6z" fill="#ef4f45"/><path d="M32 17h-6a6 6 0 0 1 6-6z" fill="#5477d2"/></svg></div>
        <div class="app"><svg viewBox="0 0 64 64"><rect width="64" height="64" rx="14" fill="url(#blue)"/><g stroke="#fff" stroke-width="5" stroke-linecap="round"><path d="M29 14l22 36M35 14L19 39M17 47l-2 3M12 39h24M46 39h6"/></g></svg></div>
        <div class="app"><svg viewBox="0 0 64 64"><rect width="64" height="64" rx="14" fill="url(#grey)"/><circle cx="32" cy="32" r="27" fill="#3d3e40"/><circle cx="32" cy="32" r="25" fill="none" stroke="#aaa" stroke-width="3" stroke-dasharray="2 2"/><g fill="none" stroke="#96989a"><circle cx="32" cy="32" r="20" stroke-width="3"/><circle cx="32" cy="32" r="10" stroke-width="2"/><path d="M32 32h20M32 32L22 14M32 32L22 50" stroke-width="4"/></g></svg><em>2</em></div>
        <div class="app wide running"><svg viewBox="0 0 80 80"><path d="M0 0h80v80H0z" fill="#f8ede8"/><path d="M33 8h15l19 59H56l-5-17H31l-6 17H14z" fill="#b51f25"/><path d="M42 25l-9 16 14-4z" fill="#f3e4dd"/><path d="M33 8L14 67h10l16-40zM31 50l17-9 3 9z" fill="#871a1f"/></svg></div>
        <div class="app"><svg viewBox="0 0 64 64"><rect width="64" height="64" rx="14" fill="#fff"/><path d="M13 14h38v36H13z" fill="#e94862"/><path d="M13 18v20l17 12h9L13 21M51 46V26L34 14h-9z" fill="#fff"/><path d="M13 14h12l26 33v3H39L13 18z" fill="#e94862"/></svg></div>
        <div class="app"><svg viewBox="0 0 64 64"><rect width="64" height="64" rx="14" fill="url(#purple)"/><g fill="none" stroke="#fff" stroke-width="3"><path d="M21 49a22 22 0 1 1 22 0M25 39a13 13 0 1 1 14 0"/></g><circle cx="32" cy="28" r="5" fill="#fff"/><path d="M26 40c0-6 12-6 12 0l-3 14c-1 3-5 3-6 0z" fill="#fff"/></svg></div>
        <div class="app"><svg viewBox="0 0 64 64"><rect width="64" height="64" rx="14" fill="#151a19"/><use href="#apple" x="7" y="19" width="21" height="24" fill="#fff"/><text x="29" y="42" font-size="26" fill="#fff" textLength="27" lengthAdjust="spacingAndGlyphs">tv</text></svg></div>
        <i class="line first"></i>
        <div class="app running"><svg viewBox="0 0 64 64"><rect width="64" height="64" rx="13" fill="#061d34"/><text x="32" y="44" font-size="35" font-weight="600" fill="#53a6fb" text-anchor="middle" textLength="41">Ps</text></svg></div>
        <div class="app running"><svg viewBox="0 0 64 64"><circle cx="32" cy="32" r="33" fill="#62d46c"/><g fill="none" stroke="#111" stroke-linecap="round"><path d="M12 22c14-5 30-4 42 4" stroke-width="6"/><path d="M14 33c12-4 26-3 36 3" stroke-width="5"/><path d="M16 43c10-3 22-2 31 3" stroke-width="4"/></g></svg></div>
        <div class="app running"><svg viewBox="0 0 64 64"><use href="#music"/></svg></div>
        <div class="app running"><svg viewBox="0 0 64 64"><path d="M2 18h62v38q0 8-10 8H14Q0 64 0 50z" fill="#dcc765"/><path d="M0 46V14A14 14 0 0 1 14 0h36a14 14 0 0 1 14 14v26q0 17-22 18H14Q0 58 0 46z" fill="#fff0a0"/><path d="M12 20c3-11 8-12 5-1 6-11 6-3 8 1 5-5 8 2 15 0h13M10 31h43M10 43h23" fill="none" stroke="#dfc771" stroke-width="3"/></svg></div>
        <div class="app running"><svg viewBox="0 0 64 64"><rect width="64" height="64" rx="14" fill="#fff"/><circle cx="33" cy="17" r="7" fill="#7b83eb"/><circle cx="48" cy="19" r="5" fill="#5059c9"/><path d="M41 27h15v14c0 9-12 9-15 2z" fill="#5059c9"/><path d="M22 27h21v16c0 14-19 14-21 0z" fill="#7b83eb"/><path d="M8 21h24v23H8z" fill="#4650b3"/><text x="20" y="38" font-size="16" font-weight="700" fill="#fff" text-anchor="middle">T</text></svg></div>
        <div class="app running"><svg viewBox="0 0 64 64"><rect width="64" height="64" rx="12" fill="#c34e32"/><circle cx="32" cy="32" r="25" fill="#f5f3f2"/><path d="M20 28l9 9-9 10M43 17l-9 9 9 10" fill="none" stroke="#c34e32" stroke-width="6"/></svg></div>
        <div class="app running"><svg class="scanner" viewBox="0 0 80 64"><path d="M2 28L32 9l46 14v10L58 57 3 36z" fill="#161616"/><path d="M2 28L32 9l46 14-20 21z" fill="#303030"/><circle cx="16" cy="55" r="14" fill="#f39130" stroke="#ddd" stroke-width="1"/><path d="M7 59l7-8 4 5 8-6-7 9-5-4z" fill="#fff" stroke="#fff" stroke-width="2"/></svg><em>1</em></div>
        <i class="line last"></i>
        <div class="app mini"><svg viewBox="0 0 76 60"><path d="M0 10h76v46H0z" fill="#f0f0f0"/><path d="M0 10h76v4H0zM26 14h25v42H26z" fill="#fff"/><path d="M30 23h8M30 31h6M30 34h9M28 52h20" stroke="#d9a7a7"/><use href="#pages" x="49" y="44" width="25" height="25"/></svg></div>
        <div class="app mini"><svg viewBox="0 0 76 60"><path d="M0 10h76v46H0z" fill="#000"/><path d="M0 10h76v4H0z" fill="#fff"/><path d="M2 52h16M30 52h14M2 17h3M70 17h4" stroke="#777" stroke-dasharray="2 3"/><use href="#safari" x="49" y="44" width="25" height="25"/></svg></div>
        <div class="app mini"><svg viewBox="0 0 76 60"><path d="M0 15h76v36H0z" fill="#fff"/><path d="M0 15h12v36H0z" fill="#eee"/><path d="M14 26h58M14 36h58M14 46h58" stroke="#888" stroke-width="3" stroke-dasharray="4 5"/><path d="M3 20v22" stroke="#bbb" stroke-dasharray="1 2"/><use href="#finder" x="49" y="44" width="25" height="25"/></svg></div>
        <div class="app mini"><svg viewBox="0 0 76 60"><path d="M0 11h76v45H0z" fill="#fff"/><path d="M0 11h12v45H0z" fill="#eee"/><path d="M0 19h76" stroke="#c99"/><path d="M14 22h60M14 27h42M14 32h60M14 37h48M14 42h60M14 47h30M14 52h35" stroke="#aaa" stroke-width="2" stroke-dasharray="3 2 6 3"/><use href="#music" x="49" y="44" width="25" height="25"/></svg></div>
        <div class="app"><svg class="trash" viewBox="0 0 64 76"><path d="M8 16l6-10 10 3 8-7 14 4 10 10-6 6H16z" fill="#d8dadb"/><path d="M12 17l7-8 5 9M28 10l6 8 6-8 8 7" fill="none" stroke="#54737a" stroke-width="3"/><path d="M4 14q28 14 56 0l-8 54q-20 10-40 0z" fill="#e6e6e6"/><path d="M15 24l6 15-4 18M39 22l-6 18 8 14M50 26l-5 25" fill="none" stroke="#d3d3d3" stroke-width="2"/></svg></div>
    </footer>
</body>
</html>
```

FILE: styles.css
```css
* {
    box-sizing: border-box;
}
body {
    margin: 0;
    width: 2880px;
    height: 1800px;
    overflow: hidden;
    font-family: Inter, "Liberation Sans", sans-serif;
    font-size: 22px;
    color: #ddd;
    background: linear-gradient(to right, #f6dbe2, transparent 60px, transparent 2800px, #efd3da), linear-gradient(#8c7d82 1676px, #dbc5cb 1800px);
}
svg {
    display: block;
    fill: #ddd;
    flex: none;
}
.defs {
    width: 0;
    height: 0;
    position: absolute;
}
i, em {
    font-style: normal;
}

/* menu bar */
.menubar {
    height: 49px;
    background: #ffe7ee;
    color: #262024;
    display: flex;
    align-items: center;
    font-size: 24.5px;
    padding: 0 38px 3px 40px;
    white-space: nowrap;
}
.apple {
    width: 25px;
    height: 31px;
    margin-right: 41px;
    fill: #262024;
}
.menu {
    display: grid;
    grid-template-columns: 181px 84px 87px 115px 108px 100px 118px 102px 76px 100px 130px 137px 80px;
    align-items: center;
}
.menu b {
    font-size: 25.5px;
    letter-spacing: .3px;
}
.status-icons {
    display: grid;
    grid-template-columns: 80px 84px 66px 74px 74px 80px 56px 72px 54px;
    justify-items: center;
    margin-left: auto;
    align-items: center;
}
.status-icons svg {
    width: 40px;
    height: 34px;
}
.status-icons .battery {
    width: 52px;
}
.siri-ball {
    width: 28px;
    height: 28px;
    border-radius: 50%;
    background: radial-gradient(#fff, transparent 45%), conic-gradient(#3f9b80, #2b83d3, #4a3f9a, #d6448c, #776b91, #3f9b80);
}
.date {
    width: 139px;
    margin-left: 19px;
    font-size: 25.5px;
}
.time {
    width: 67px;
    font-size: 25.5px;
}

/* window */
.window {
    height: 1626px;
    background: #535353;
    border: solid #383838;
    border-width: 2px 1px;
    border-radius: 16px 16px 0 0;
    overflow: hidden;
}
.titlebar {
    height: 45px;
    border-bottom: 2px solid #383838;
    display: grid;
    grid-template-columns: 1fr auto 1fr;
    align-items: center;
    font-size: 25.5px;
    padding-top: 4px;
    color: #e4e4e4;
}
.titlebar span {
    margin-left: -2px;
}
.lights {
    display: flex;
    gap: 16px;
    padding-left: 17px;
    margin-top: -5px;
}
.lights i {
    width: 24px;
    height: 24px;
    border-radius: 50%;
    background: #5d5d5d;
}
.lights i:first-child {
    background: radial-gradient(#1a1a1a 4px, #5d5d5d 5px);
}

/* options bar */
.options {
    height: 67px;
    border-bottom: 2px solid #383838;
    display: flex;
    align-items: center;
    font-size: 20px;
    color: #eee;
    white-space: nowrap;
}
.options-left {
    width: 220px;
}
.options-icons {
    width: 260px;
}
.options-right {
    width: 260px;
    margin: 0 8px 0 auto;
}
.select {
    border: 2px solid #666;
    border-radius: 6px;
    background: #454545;
    display: flex;
    align-items: center;
    justify-content: space-between;
    padding: 0 7px 0 13px;
    color: #fff;
}
.select svg {
    width: 15px;
    height: 10px;
    color: #ddd;
}
.path {
    width: 138px;
    height: 38px;
}
.make {
    width: 82px;
    padding-left: 15px;
}
.options button {
    height: 48px;
    border: 2px solid #666;
    border-radius: 6px;
    background: #454545;
    color: #fff;
    font: 500 20px Inter;
    padding: 0;
    margin-right: 9px;
}
.selection {
    width: 149px;
}
.mask {
    width: 92px;
}
.shape {
    width: 102px;
    margin-right: 0 !important;
}
.check {
    width: 20px;
    height: 20px;
    border: 2px solid #616161;
    border-radius: 4px;
    margin-right: 15px;
}
.check.on {
    background: #ddd;
    border: 0;
    margin-left: 11px;
}
.auto {
    width: 169px;
    font-size: 20.2px;
}
.dim {
    color: #858585;
    font-size: 20.2px;
}

/* main area */
.workspace {
    display: flex;
    height: 1510px;
}
.tools {
    width: 77px;
    flex: none;
}
.strip {
    height: 24px;
    flex: none;
    background: #424242;
    border-bottom: 2px solid #383838;
    color: #ddd;
    font-size: 24px;
    line-height: 19px;
    letter-spacing: 1px;
}
.strip.left {
    padding-left: 9px;
}
.grip {
    height: 8px;
    width: 40px;
    margin: 7px auto 18px;
    background: repeating-linear-gradient(to right, #424242 0 2px, transparent 2px 4px);
}
.tool {
    width: 76px;
    height: 52px;
    margin-left: -1px;
    color: #ddd;
    background: linear-gradient(135deg, transparent 50%, #ccc 50%) 57px 38px / 7px 5px no-repeat;
}
.tool.active {
    background: none;
}
.tool.nocorner {
    background: none;
}
.swatches {
    width: 78px;
    height: 230px;
    margin: 0 0 0 -1px;
}
.document {
    width: 2226px;
    flex: none;
    border: solid #383838;
    border-width: 0 3px;
}
.tabs {
    height: 59px;
    background: #424242;
    border-bottom: 2px solid #383838;
    display: flex;
    font: 700 23px "Open Sans";
}
.tab {
    display: flex;
    align-items: center;
    border-right: 2px solid #383838;
    color: #a9a9a9;
    padding: 0 0 3px 14px;
    white-space: nowrap;
}
.tab i {
    width: 34px;
    font: 26px Inter;
    color: #ccc;
}
.one {
    width: 600px;
}
.two {
    width: 714px;
}
.three {
    width: 630px;
}
.tab.active {
    background: #535353;
    color: #fff;
}
.canvas {
    height: 1420px;
    background: #282828;
    display: flex;
    justify-content: space-between;
    padding-left: 475px;
}
.paper {
    width: 1250px;
    height: 1397px;
    background: #fff;
}
.paper path, .paper ellipse {
    fill: none;
    stroke: #111;
    stroke-width: 1.6;
    vector-effect: non-scaling-stroke;
}
.paper .fill {
    fill: #fff;
}
.paper .dash {
    stroke-dasharray: 17 11;
}
.paper .small {
    stroke-dasharray: 13 7;
}
.paper .short {
    stroke-dasharray: 6 4;
}
.vscroll {
    width: 32px;
    background: #4a4a4a;
    padding: 184px 5px 0 6px;
}
.vscroll i {
    display: block;
    height: 520px;
    border-radius: 10px;
    background: #696969;
}
.status {
    height: 31px;
    background: #424242;
    display: flex;
    align-items: center;
    font-size: 20.5px;
}
.zoom {
    width: 121px;
    padding-left: 26px;
    color: #fff;
}
.size {
    width: 366px;
    height: 31px;
    background: #4d4d4d;
    padding: 3px 10px 0 30px;
    display: flex;
    justify-content: space-between;
    color: #ccc;
    margin-right: 64px;
    white-space: nowrap;
}
.size svg {
    width: 8px;
    height: 18px;
    margin: 5px 0 0;
}
.hscroll i {
    display: block;
    width: 708px;
    height: 20px;
    border-radius: 10px;
    background: #696969;
}

/* right side */
.right {
    flex: 1;
    display: flex;
    flex-direction: column;
    background: #444;
}
.right .strip {
    height: 25px;
    display: flex;
    justify-content: space-between;
    padding: 0 11px 0 48px;
    border-left: 2px solid #383838;
}
.columns {
    display: flex;
    flex: 1;
}
.icons {
    width: 79px;
    background: #535353;
    border: solid #383838;
    border-width: 0 2px;
}
.group {
    height: 138px;
    border-bottom: 2px solid #383838;
    padding-top: 6px;
}
.group .grip {
    margin: 0 auto 2px;
}
.group svg {
    width: 76px;
    height: 120px;
}
.group .para {
    height: 40px;
    margin-top: 17px;
}
.glyph {
    display: flex;
    align-items: center;
    justify-content: center;
    font: 36px/36px "Open Sans";
    margin-top: 12px;
}
.glyph i {
    width: 2px;
    height: 34px;
    background: #ddd;
    margin-left: 2px;
}
.panels {
    flex: 1;
    margin-left: 3px;
}
.panel {
    background: #535353;
    border: 2px solid #383838;
    border-top: 0;
    margin-bottom: 4px;
    font-size: 20px;
}
.color {
    height: 509px;
}
.properties {
    height: 493px;
}
.layers {
    height: 475px;
    margin: 0;
}
.ptabs {
    height: 57px;
    display: flex;
    background: #424242;
    border-bottom: 2px solid #383838;
    font: 600 21px/54px "Open Sans";
    color: #a9a9a9;
}
.ptabs b {
    font-weight: 600;
    padding-left: 17px;
    border-right: 2px solid #383838;
    overflow: hidden;
    white-space: nowrap;
}
.ptabs .on {
    background: #535353;
    color: #fff;
    height: 57px;
    font-weight: 700;
}
.ptabs svg {
    width: 20px;
    height: 16px;
    margin: 19px 10px 0 auto;
}
.color b:nth-child(1) { width: 93px; }
.color b:nth-child(2) { width: 107px; }
.color b:nth-child(3) { width: 106px; padding-left: 16px; }
.color b:nth-child(4) { width: 110px; padding-left: 16px; }
.properties b:nth-child(1) { width: 143px; }
.properties b:nth-child(2) { width: 161px; }
.properties b:nth-child(3) { width: 112px; }
.layers b:nth-child(1) { width: 105px; }
.layers b:nth-child(2) { width: 131px; }
.layers b:nth-child(3) { width: 94px; }
.layers .ptabs {
    height: 56px;
}
.picker {
    display: flex;
    padding: 13px 0 0 16px;
}
.chips {
    width: 62px;
    height: 64px;
    margin: 4px 12px 0 0;
}
.field {
    width: 296px;
    height: 402px;
    background: linear-gradient(to top, #000, transparent), linear-gradient(to right, #fff, #3b8ef5);
    padding: 323px 0 0 27px;
}
.field i {
    display: block;
    width: 24px;
    height: 24px;
    border: 2px solid #fff;
    border-radius: 50%;
}
.marker {
    width: 18px;
    height: 20px;
    margin: 157px 3px 0 13px;
}
.hue {
    width: 38px;
    height: 402px;
    background: linear-gradient(#ec3223, #ea35ec 17%, #0000f5 33%, #72fbfd 50%, #75fb4c 67%, #fffe54 83%, #ec3223);
}

/* properties */
.kind {
    height: 69px;
    border-bottom: 2px solid #404040;
    display: flex;
    align-items: center;
    gap: 9px;
    padding-left: 20px;
    font-size: 20.4px;
}
.box, .link {
    width: 47px;
    height: 47px;
    border: 2px solid #626262;
    border-radius: 6px;
    background: #383838;
    display: flex;
    align-items: center;
    justify-content: center;
}
.box svg {
    width: 28px;
    height: 24px;
}
.scrollbox {
    display: flex;
    position: relative;
}
.props, .list {
    width: 460px;
}
h3 {
    margin: 0;
    font-size: 21.2px;
    font-weight: 600;
    color: #fff;
    display: flex;
    align-items: center;
    gap: 12px;
    padding-left: 14px;
    height: 60px;
}
h3 svg {
    width: 16px;
    height: 10px;
    color: #ddd;
}
.transform {
    display: grid;
    grid-template-columns: 52px 45px 122px 40px 121px;
    grid-template-rows: 33px 33px 47px;
    row-gap: 16px;
    padding-left: 16px;
    align-items: center;
    height: 167px;
    align-content: start;
    border-bottom: 2px solid #404040;
}
.link {
    grid-row: 1 / 3;
    width: 51px;
    height: 53px;
}
.link svg {
    width: 16px;
    height: 30px;
}
.transform label {
    text-align: right;
    padding-right: 10px;
}
.input {
    height: 33px;
    border: 2px solid #666;
    background: #454545;
    color: #fff;
    padding-left: 6px;
    line-height: 29px;
}
.transform label:nth-of-type(3) {
    grid-column: 2;
}
.angle {
    width: 26px;
    height: 20px;
    grid-column: 2;
    margin-left: 6px;
}
.combo {
    display: flex;
    align-items: center;
    justify-content: space-between;
    border-radius: 5px;
    height: 36px;
    line-height: 32px;
}
.combo svg {
    width: 29px;
    height: 32px;
    padding: 11px 7px;
    border-left: 2px solid #666;
    color: #ddd;
}
.flips {
    width: 110px;
    height: 34px;
    grid-column: 4 / 6;
    margin-left: 41px;
}
.props p {
    margin: 0 0 0 16px;
}
.props .second {
    height: 64px;
}
.bar {
    width: 28px;
    height: 316px;
    background: #4a4a4a;
    padding: 5px 2px 0 6px;
}
.bar i {
    display: block;
    height: 115px;
    border-radius: 10px;
    background: #696969;
}
.tooltip {
    position: absolute;
    left: 238px;
    top: 105px;
    width: 260px;
    height: 36px;
    background: #ffffd0;
    color: #111;
    font-size: 20.3px;
    line-height: 36px;
    padding-left: 18px;
    white-space: nowrap;
    box-shadow: 0 4px 20px rgba(0, 0, 0, .3);
}

/* layers */
.row {
    display: flex;
    align-items: center;
    height: 56px;
    border-bottom: 2px solid #404040;
    padding-left: 6px;
}
.filter {
    height: 63px;
    padding-top: 10px;
}
.filter .select {
    width: 177px;
    height: 38px;
}
.filter .select svg:last-child {
    margin-left: auto;
}
.filter .mag {
    width: 22px;
    height: 22px;
    margin: 0 4px 0 2px;
}
.filters {
    width: 290px;
    height: 64px;
}
.blend .select {
    width: 262px;
    height: 38px;
    border-color: #606060;
    background: #4d4d4d;
    color: #8b8b8b;
}
.blend svg, .lock .combo svg {
    color: #777;
    border-color: #606060;
}
.row .combo {
    width: 104px;
    border-color: #606060;
    background: #4d4d4d;
    color: #777;
}
.row .name {
    color: #8b8b8b;
    width: 91px;
    text-align: right;
    padding-right: 5px;
}
.lock {
    height: 58px;
    padding-left: 10px;
    border: 0;
}
.lock > span:first-child {
    width: 53px;
}
.locks {
    width: 220px;
    height: 60px;
}
.lock .name {
    width: 76px;
}
.list {
    height: 191px;
    color: #fff;
}
.layer {
    height: 82px;
    display: flex;
    align-items: center;
    border-bottom: 2px solid #404040;
    font-size: 20.2px;
}
.layer.cut {
    height: 27px;
}
.layer.selected {
    background: #6b6b6b;
}
.eye {
    width: 61px;
    height: 100%;
    background: #535353;
    border-right: 2px solid #404040;
    display: flex;
    align-items: center;
    justify-content: center;
    flex: none;
}
.eye i {
    width: 24px;
    height: 24px;
    border: 2px solid #464646;
}
.eye svg {
    width: 26px;
    height: 18px;
}
.thumb {
    width: 58px;
    height: 64px;
    border: 2px solid #282828;
    margin: 0 16px 0 7px;
    background: #fff;
}
.framed {
    width: 66px;
    height: 72px;
    border: 0;
    margin: 0 12px 0 3px;
    background: none;
}
.checker {
    height: 17px;
    border-top: 0;
    margin-top: -9px;
    background: conic-gradient(#ccc 25%, #fff 0 50%, #ccc 0 75%, #fff 0) 0 0 / 8px 8px;
}
.layers .bar {
    height: 191px;
    padding-top: 47px;
}
.layers .bar i {
    height: 140px;
}
.footer {
    border-top: 2px solid #404040;
}
.footer svg {
    width: 490px;
    height: 48px;
}

/* dock */
.dock {
    margin: 13px 0 0 66px;
    width: 2748px;
    height: 102px;
    border-radius: 28px;
    background: linear-gradient(#e8d0d7, #f1d9e1);
    border: 1px solid #cbb5bc;
    border-top-color: #f3e2e7;
    padding: 15px 0 0 5px;
    display: flex;
}
.app {
    width: 83.2px;
    height: 82px;
    flex: none;
    position: relative;
    display: flex;
    justify-content: center;
}
.app svg {
    width: 64px;
    height: 64px;
    overflow: visible;
}
.app.wide svg {
    width: 80px;
    height: 80px;
    margin-top: -8px;
}
.app.running::after {
    content: "";
    position: absolute;
    left: 38px;
    top: 74px;
    width: 8px;
    height: 8px;
    border-radius: 50%;
    background: #6f555f;
}
.app em {
    position: absolute;
    right: -1px;
    top: -9px;
    width: 31px;
    height: 31px;
    border-radius: 50%;
    background: #ec5347;
    color: #fff;
    font-size: 18px;
    line-height: 31px;
    text-align: center;
}
.app .scanner {
    width: 76px;
    height: 64px;
}
.app.mini svg {
    width: 76px;
    height: 60px;
}
.app .trash {
    width: 58px;
    height: 76px;
    margin-top: -7px;
}
.line {
    width: 2px;
    height: 74px;
    background: #ae99a1;
    margin: -2px 16px 0 18px;
    flex: none;
}
.line.last {
    margin: -2px 17px 0 20px;
}
```
